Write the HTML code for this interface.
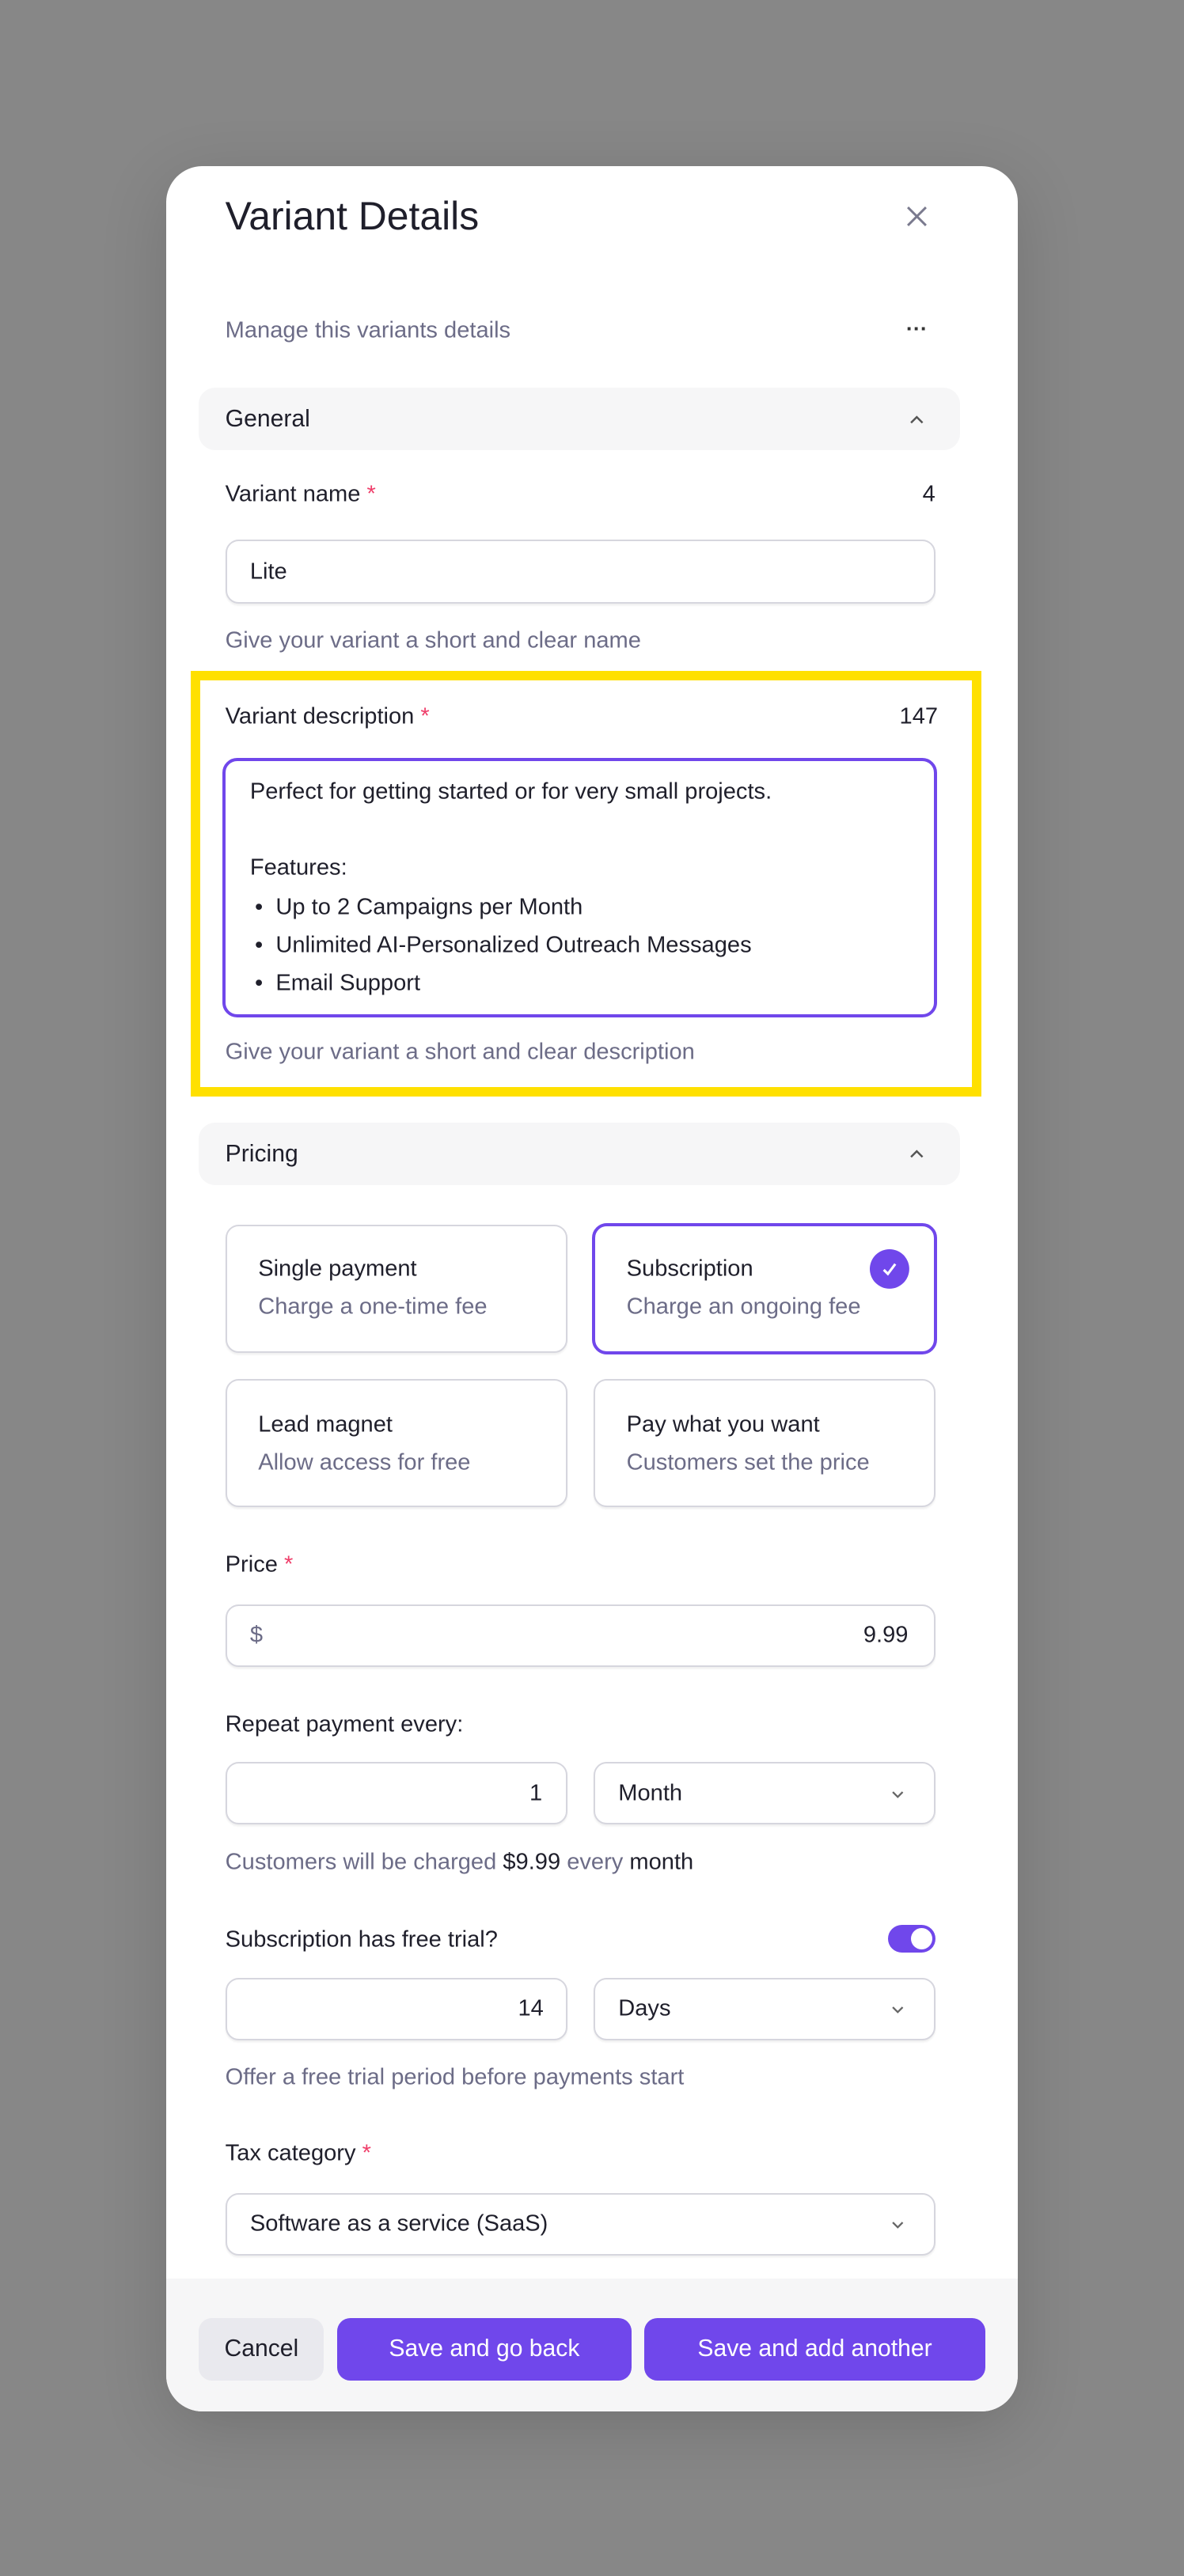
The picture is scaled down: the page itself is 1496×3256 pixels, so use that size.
<!DOCTYPE html>
<html><head><meta charset="utf-8"><style>
html,body{margin:0;padding:0}
body{width:1496px;height:3256px;background:#878787;overflow:hidden;font-family:"Liberation Sans",sans-serif}
#s{position:absolute;left:0;top:0;width:720px;height:1567px;zoom:2.0778}
.a{position:absolute}
.t{position:absolute;white-space:nowrap;line-height:1;transform:translateY(-50%)}
.lab{font-size:14px;color:#1f1f2b}
.hint{font-size:14px;color:#6c6c87}
.box{position:absolute;border:1px solid #d6d6de;border-radius:8px;background:#fff;box-shadow:0 1px 1px rgba(0,0,0,.06);box-sizing:border-box}
.req{color:#ef3e6a}
.btn{position:absolute;top:1410px;height:38px;border-radius:8px;background:#7047eb;color:#fff;font-size:14.5px;display:flex;align-items:center;justify-content:center}
</style></head><body><div id="s">
<div class="a" style="left:101px;top:101px;width:518px;height:1366px;background:#fff;border-radius:22px;overflow:hidden;box-shadow:0 10px 40px rgba(0,0,0,.15)">
 <div class="a" style="left:0;top:1285px;width:518px;height:81px;background:#f6f6f7"></div>
</div>
<div class="t" style="left:137px;top:132px;font-size:24px;color:#1f1f2b">Variant Details</div>
<svg class="a" style="left:551px;top:125px" width="13" height="13" viewBox="0 0 13 13"><path d="M1 1L12 12M12 1L1 12" stroke="#7a7a8e" stroke-width="1.4"/></svg>
<div class="t hint" style="left:137px;top:201px">Manage this variants details</div>
<div class="t" style="left:551px;top:200px;font-size:13px;color:#333;letter-spacing:0px;font-weight:bold">···</div>

<div class="a" style="left:121px;top:236px;width:463px;height:38px;background:#f6f6f7;border-radius:10px"></div>
<div class="t lab" style="left:137px;top:255px;font-size:14.5px">General</div>
<svg class="a" style="left:553px;top:252px" width="9" height="6" viewBox="0 0 9 6"><path d="M1 5L4.5 1.5L8 5" stroke="#555" stroke-width="1.2" fill="none"/></svg>

<div class="t lab" style="left:137px;top:301px">Variant name <span class="req">*</span></div>
<div class="t lab" style="left:561px;top:301px">4</div>
<div class="box" style="left:137px;top:328px;width:432px;height:39px"></div>
<div class="t lab" style="left:152px;top:348px">Lite</div>
<div class="t hint" style="left:137px;top:390px">Give your variant a short and clear name</div>

<div class="a" style="left:116px;top:408px;width:481px;height:259px;border:6px solid #ffe000;box-sizing:border-box"></div>
<div class="t lab" style="left:137px;top:436px">Variant description <span class="req">*</span></div>
<div class="t lab" style="left:547px;top:436px">147</div>
<div class="a" style="left:135px;top:461px;width:435px;height:158px;border:2px solid #7047eb;border-radius:9px;box-sizing:border-box"></div>
<div class="t lab" style="left:152px;top:482px">Perfect for getting started or for very small projects.</div>
<div class="t lab" style="left:152px;top:528px">Features:</div>
<div class="t lab" style="left:155px;top:552px">•&nbsp; Up to 2 Campaigns per Month</div>
<div class="t lab" style="left:155px;top:575px">•&nbsp; Unlimited AI-Personalized Outreach Messages</div>
<div class="t lab" style="left:155px;top:598px">•&nbsp; Email Support</div>
<div class="t hint" style="left:137px;top:640px">Give your variant a short and clear description</div>

<div class="a" style="left:121px;top:683px;width:463px;height:38px;background:#f6f6f7;border-radius:10px"></div>
<div class="t lab" style="left:137px;top:702px;font-size:14.5px">Pricing</div>
<svg class="a" style="left:553px;top:699px" width="9" height="6" viewBox="0 0 9 6"><path d="M1 5L4.5 1.5L8 5" stroke="#555" stroke-width="1.2" fill="none"/></svg>

<div class="box" style="left:137px;top:745px;width:208px;height:78px"></div>
<div class="t lab" style="left:157px;top:772px">Single payment</div>
<div class="t hint" style="left:157px;top:795px">Charge a one-time fee</div>
<div class="a" style="left:360px;top:744px;width:210px;height:80px;border:2px solid #7047eb;border-radius:9px;box-sizing:border-box"></div>
<div class="t lab" style="left:381px;top:772px">Subscription</div>
<div class="t hint" style="left:381px;top:795px">Charge an ongoing fee</div>
<svg class="a" style="left:529px;top:760px" width="24" height="24" viewBox="0 0 24 24"><circle cx="12" cy="12" r="12" fill="#7047eb"/><path d="M8.5 12.5L11 15L15.5 9" stroke="#fff" stroke-width="1.5" fill="none"/></svg>
<div class="box" style="left:137px;top:839px;width:208px;height:78px"></div>
<div class="t lab" style="left:157px;top:867px">Lead magnet</div>
<div class="t hint" style="left:157px;top:890px">Allow access for free</div>
<div class="box" style="left:361px;top:839px;width:208px;height:78px"></div>
<div class="t lab" style="left:381px;top:867px">Pay what you want</div>
<div class="t hint" style="left:381px;top:890px">Customers set the price</div>

<div class="t lab" style="left:137px;top:952px">Price <span class="req">*</span></div>
<div class="box" style="left:137px;top:976px;width:432px;height:38px"></div>
<div class="t hint" style="left:152px;top:995px">$</div>
<div class="t lab" style="left:525px;top:995px">9.99</div>

<div class="t lab" style="left:137px;top:1049px">Repeat payment every:</div>
<div class="box" style="left:137px;top:1072px;width:208px;height:38px"></div>
<div class="t lab" style="left:322px;top:1091px">1</div>
<div class="box" style="left:361px;top:1072px;width:208px;height:38px"></div>
<div class="t lab" style="left:376px;top:1091px">Month</div>
<svg class="a" style="left:542px;top:1089px" width="8" height="5" viewBox="0 0 8 5"><path d="M1 1L4 4L7 1" stroke="#666" stroke-width="1.1" fill="none"/></svg>
<div class="t hint" style="left:137px;top:1133px">Customers will be charged <span style="color:#1f1f2b">$9.99</span> every <span style="color:#1f1f2b">month</span></div>

<div class="t lab" style="left:137px;top:1180px">Subscription has free trial?</div>
<div class="a" style="left:540px;top:1171px;width:29px;height:17px;border-radius:9px;background:#7047eb"></div>
<div class="a" style="left:554px;top:1173px;width:13px;height:13px;border-radius:50%;background:#fff"></div>
<div class="box" style="left:137px;top:1203px;width:208px;height:38px"></div>
<div class="t lab" style="left:315px;top:1222px">14</div>
<div class="box" style="left:361px;top:1203px;width:208px;height:38px"></div>
<div class="t lab" style="left:376px;top:1222px">Days</div>
<svg class="a" style="left:542px;top:1220px" width="8" height="5" viewBox="0 0 8 5"><path d="M1 1L4 4L7 1" stroke="#666" stroke-width="1.1" fill="none"/></svg>
<div class="t hint" style="left:137px;top:1264px">Offer a free trial period before payments start</div>

<div class="t lab" style="left:137px;top:1310px">Tax category <span class="req">*</span></div>
<div class="box" style="left:137px;top:1334px;width:432px;height:38px"></div>
<div class="t lab" style="left:152px;top:1353px">Software as a service (SaaS)</div>
<svg class="a" style="left:542px;top:1351px" width="8" height="5" viewBox="0 0 8 5"><path d="M1 1L4 4L7 1" stroke="#666" stroke-width="1.1" fill="none"/></svg>

<div class="btn" style="left:121px;width:76px;background:#e9e9ee;color:#1f1f2b">Cancel</div>
<div class="btn" style="left:205px;width:179px">Save and go back</div>
<div class="btn" style="left:392px;width:207px">Save and add another</div>
</div></body></html>
